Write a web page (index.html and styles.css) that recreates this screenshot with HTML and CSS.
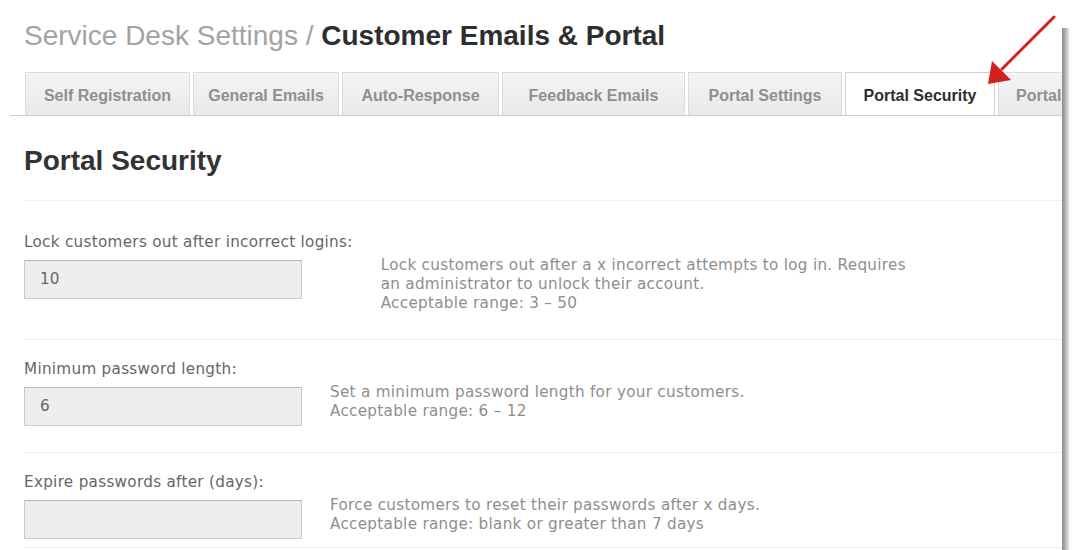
FILE: index.html
```html
<!DOCTYPE html>
<html lang="en">
<head>
<meta charset="utf-8">
<title>Service Desk Settings / Customer Emails &amp; Portal</title>
<link rel="stylesheet" href="styles.css">
</head>
<body>
<div class="page">
  <h1 class="title"><span class="crumb">Service Desk Settings /</span> <span class="current">Customer Emails &amp; Portal</span></h1>

  <nav class="tabs">
    <a class="tab">Self Registration</a>
    <a class="tab">General Emails</a>
    <a class="tab">Auto-Response</a>
    <a class="tab">Feedback Emails</a>
    <a class="tab">Portal Settings</a>
    <a class="tab active">Portal Security</a>
    <a class="tab">Portal</a>
  </nav>

  <section class="panel">
    <h2 class="panel-title">Portal Security</h2>

    <div class="fields">
      <div class="field">
        <div class="field-main">
          <label class="field-label">Lock customers out after incorrect logins:</label>
          <div class="input">10</div>
        </div>
        <p class="hint">Lock customers out after a x incorrect attempts to log in. Requires<br>an administrator to unlock their account.<br>Acceptable range: 3 &ndash; 50</p>
      </div>

      <div class="field">
        <div class="field-main">
          <label class="field-label">Minimum password length:</label>
          <div class="input">6</div>
        </div>
        <p class="hint">Set a minimum password length for your customers.<br>Acceptable range: 6 &ndash; 12</p>
      </div>

      <div class="field last">
        <div class="field-main">
          <label class="field-label">Expire passwords after (days):</label>
          <div class="input"></div>
        </div>
        <p class="hint">Force customers to reset their passwords after x days.<br>Acceptable range: blank or greater than 7 days</p>
      </div>
    </div>
  </section>

  <!-- callout pointing at the selected tab -->
  <svg class="callout" width="90" height="90" viewBox="0 0 90 90">
    <line x1="79" y1="13" x2="27" y2="65" stroke="#d21f1f" stroke-width="3" stroke-linecap="round"/>
    <polygon points="13,80 17,57 36,76" fill="#d21f1f"/>
  </svg>
</div>
</body>
</html>
```

FILE: styles.css
```css
html, body {
  margin: 0;
  padding: 0;
  background: #fff;
}

body {
  font-family: "Liberation Sans", Arial, sans-serif;
  color: #333;
}

.page {
  position: relative;
  box-sizing: border-box;
  width: 1062px;
  height: 550px;
  padding: 20px 0 0 24px;
}

/* soft shadow along the right edge of the settings sheet */
.page::after {
  content: "";
  position: absolute;
  top: 28px;
  bottom: 0;
  left: 1062px;
  width: 8px;
  background: linear-gradient(to right, #8a8a8a, #b5b5b5 45%, #e6e6e6 85%, #fff);
}

.title {
  margin: 0;
  font-size: 28px;
  line-height: 32px;
  font-weight: bold;
  white-space: nowrap;
}

.crumb {
  font-weight: normal;
  color: #a3a3a3;
}

.current {
  color: #2e2e2e;
}

/* tab strip */
.tabs {
  display: flex;
  gap: 3px;
  margin: 20px 0 0 -14px;
  padding-left: 15px;
  border-bottom: 1px solid #cfcfcf;
  height: 43px;
  overflow: hidden;
}

.tab {
  flex: none;
  box-sizing: border-box;
  height: 43px;
  padding-top: 2px;
  line-height: 41px;
  text-align: center;
  font-size: 16px;
  font-weight: bold;
  color: #8f8f8f;
  background: linear-gradient(#f4f4f4, #e9e9e9);
  border: 1px solid #dcdcdc;
  border-bottom: none;
  white-space: nowrap;
}

.tab:nth-child(1) { width: 165px; }
.tab:nth-child(2) { width: 146px; }
.tab:nth-child(3) { width: 157px; }
.tab:nth-child(4) { width: 183px; }
.tab:nth-child(5) { width: 154px; }
.tab:nth-child(6) { width: 150px; }
.tab:nth-child(7) { width: 100px; text-align: left; padding-left: 17px; }

.tab.active {
  background: #fff;
  color: #2e2e2e;
  border-color: #cfcfcf;
  height: 44px;
}

/* settings panel */
.panel-title {
  margin: 29px 0 0 0;
  padding-bottom: 23px;
  font-size: 28px;
  line-height: 32px;
  font-weight: bold;
  color: #333;
  border-bottom: 1px solid #efefef;
}

.fields {
  padding-top: 12px;
  font-family: "DejaVu Sans", Verdana, sans-serif;
}

.field {
  display: flex;
  align-items: flex-start;
  padding: 20px 0 26px 0;
  border-bottom: 1px solid #efefef;
}

.field.last {
  padding-bottom: 8px;
}

.field-main {
  flex: none;
}

.field-label {
  display: block;
  font-size: 15.2px;
  line-height: 19px;
  letter-spacing: 0.3px;
  color: #666;
  white-space: nowrap;
  margin-bottom: 8px;
}

.input {
  box-sizing: border-box;
  width: 278px;
  height: 39px;
  padding: 0 15px;
  background: #eeeeee;
  border: 1px solid #c9c9c9;
  border-top-color: #b8b8b8;
  font-size: 15.2px;
  line-height: 37px;
  color: #666;
}

.hint {
  margin: 23px 0 0 28px;
  font-size: 15.2px;
  line-height: 19px;
  letter-spacing: 0.3px;
  color: #8e8e8e;
  white-space: nowrap;
}

.callout {
  position: absolute;
  left: 975px;
  top: 4px;
}
```
